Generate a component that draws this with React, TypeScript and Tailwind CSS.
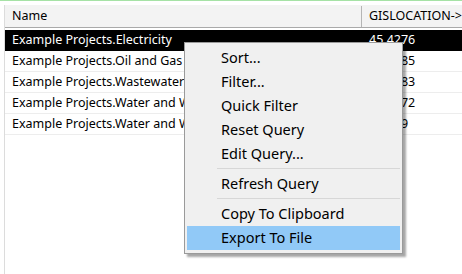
const rows = [
  { name: 'Example Projects.Electricity', value: '45.4276' },
  { name: 'Example Projects.Oil and Gas', value: '45.4285' },
  { name: 'Example Projects.Wastewater', value: '45.4283' },
  { name: 'Example Projects.Water and Wastewater', value: '45.4272' },
  { name: 'Example Projects.Water and Wells', value: '45.419' },
]

type Item = { label: string; active?: boolean } | 'sep'

const menu: Item[] = [
  { label: 'Sort...' },
  { label: 'Filter...' },
  { label: 'Quick Filter' },
  { label: 'Reset Query' },
  { label: 'Edit Query...' },
  'sep',
  { label: 'Refresh Query' },
  'sep',
  { label: 'Copy To Clipboard' },
  { label: 'Export To File', active: true },
]

export default function App() {
  return (
    <div className="relative h-[274px] w-[462px] overflow-hidden border-t border-[#a6e2a6] bg-white font-['Noto_Sans',sans-serif] text-black">
      <div className="ml-1 mt-1 h-full border-l border-[#dcdcdc]">
        {/* header */}
        <div className="flex h-[23px] border-b border-[#a9a9a9] bg-[#f3f3f3] pt-px text-[12.5px]">
          <div className="flex w-[357px] items-center border-r border-[#b5b5b5] pl-[7px]">Name</div>
          <div className="flex flex-1 items-center overflow-hidden whitespace-nowrap pl-[7px]">GISLOCATION-&gt;Latitude</div>
        </div>

        <div className="mt-[2px] text-[12.5px]">
          {rows.map((r, i) => (
            <div
              key={r.name}
              className={
                'flex h-[21px] border-b ' +
                (i === 0 ? 'border-black bg-black text-white' : 'border-[#ededed]')
              }
            >
              <div className={'flex w-[357px] items-center whitespace-nowrap pl-[7px] ' + (i === 0 ? '' : 'border-r border-[#ededed]')}>
                {r.name}
              </div>
              <div className="flex flex-1 items-center pl-[7px]">{r.value}</div>
            </div>
          ))}
        </div>
      </div>

      {/* context menu */}
      <div className="absolute left-[184px] top-[41px] w-[219px] border border-[#9a9a9a] bg-[#f0f0f0] px-[2px] py-[3px] text-[14.5px] shadow-[3px_3px_2px_rgba(0,0,0,0.35)]">
        {menu.map((m, i) =>
          m === 'sep' ? (
            <div key={i} className="pb-[3px] pl-[30px] pt-[2px]">
              <div className="h-px bg-[#d7d7d7]" />
            </div>
          ) : (
            <div
              key={i}
              className={'flex h-[24px] items-center pl-[34px] ' + (m.active ? 'bg-[#91c9f7]' : '')}
            >
              {m.label}
            </div>
          ),
        )}
      </div>
    </div>
  )
}
